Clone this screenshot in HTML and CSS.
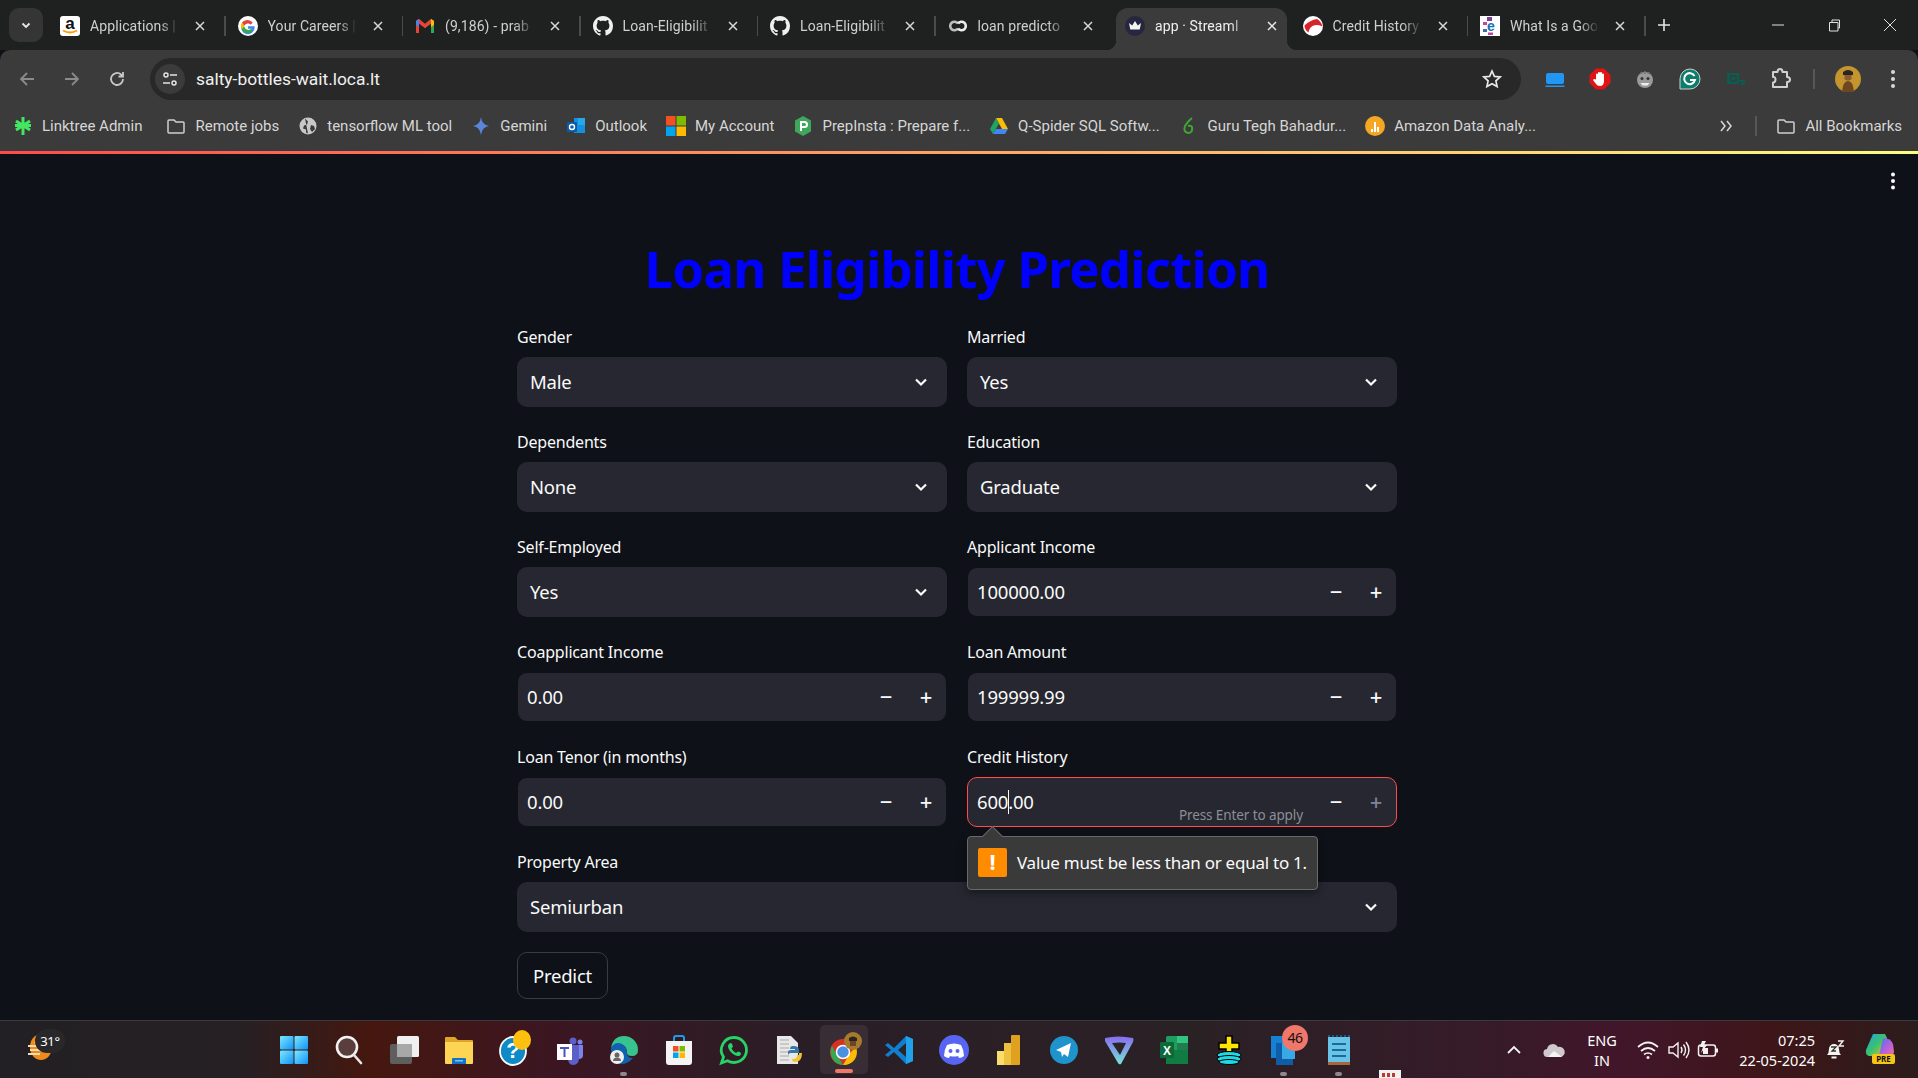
FILE: index.html
```html
<!DOCTYPE html>
<html lang="en">
<head>
<meta charset="utf-8">
<title>app · Streamlit</title>
<link rel="stylesheet" href="styles.css">
</head>
<body>
<header class="tabstrip">
  <div class="tabsearch"><svg viewBox="0 0 12 12" class="ic12"><path d="M2.500 4.500 6 8l3.500-3.500" fill="none" stroke="#e8e8e8" stroke-width="1.800"/></svg></div>
  <div class="tab"><svg class="fav" viewBox="0 0 20 20"><rect width="20" height="20" rx="3" fill="#fff"/><text x="10" y="13" text-anchor="middle" class="favtext">a</text><path d="M3 14.500q7 4 14 0" fill="none" stroke="#f90" stroke-width="1.800"/></svg><span class="tabtitle">Applications |</span><svg class="tabx" viewBox="0 0 12 12"><path d="M2 2l8 8M10 2l-8 8" stroke="#d8d8d8" stroke-width="1.500"/></svg><i class="tabsep"></i></div>
  <div class="tab"><svg class="fav" viewBox="0 0 20 20"><circle cx="10" cy="10" r="10" fill="#fff"/><path d="M16.500 10.200H10v2.600h3.600a4 4 0 1 1-1-4.400l2-2A6.800 6.800 0 1 0 16.700 11z" fill="#4285f4"/><path d="M3.900 6.600A6.800 6.800 0 0 1 14.600 6.400l-2 2a4 4 0 0 0-6.300 1.200z" fill="#ea4335"/><path d="M3.900 13.400a6.800 6.800 0 0 1 0-6.800l2.400 3a4 4 0 0 0 0 .8z" fill="#fbbc05"/><path d="M3.900 13.400l2.400-3a4 4 0 0 0 6.500 2.600l2.200 2.100A6.800 6.800 0 0 1 3.900 13.400z" fill="#34a853"/></svg><span class="tabtitle">Your Careers |</span><svg class="tabx" viewBox="0 0 12 12"><path d="M2 2l8 8M10 2l-8 8" stroke="#d8d8d8" stroke-width="1.500"/></svg><i class="tabsep"></i></div>
  <div class="tab"><svg class="fav" viewBox="0 0 20 20"><path d="M1 17V5l3-2 6 5V12L4 7.500V17z" fill="#ea4335"/><path d="M19 17V5l-3-2-6 5V12l6-4.500V17z" fill="#34a853"/><path d="M4 3l6 5 6-5 3 2-9 7-9-7z" fill="#ea4335"/><path d="M16 3l3 2v4l-3 2z" fill="#fbbc05"/><path d="M1 5v4l3 2V3z" fill="#4285f4"/></svg><span class="tabtitle">(9,186) - prab</span><svg class="tabx" viewBox="0 0 12 12"><path d="M2 2l8 8M10 2l-8 8" stroke="#d8d8d8" stroke-width="1.500"/></svg><i class="tabsep"></i></div>
  <div class="tab"><svg class="fav" viewBox="0 0 16 16"><path fill="#f0f0f0" d="M8 0C3.580 0 0 3.580 0 8c0 3.540 2.290 6.530 5.470 7.590.4.070.55-.17.55-.38 0-.19-.01-.82-.01-1.490-2.010.37-2.530-.49-2.690-.94-.09-.23-.48-.94-.82-1.130-.28-.15-.68-.52-.01-.53.630-.01 1.080.58 1.230.82.720 1.210 1.870.87 2.330.66.070-.52.280-.87.510-1.070-1.780-.2-3.640-.89-3.640-3.950 0-.87.310-1.590.820-2.150-.080-.2-.360-1.020.080-2.120 0 0 .670-.21 2.200.82.640-.18 1.320-.27 2-.27s1.360.09 2 .27c1.530-1.040 2.200-.82 2.200-.82.440 1.100.160 1.920.080 2.120.510.560.820 1.270.820 2.150 0 3.070-1.870 3.750-3.650 3.950.290.250.540.730.540 1.480 0 1.070-.010 1.930-.010 2.200 0 .210.150.460.550.380A8.010 8.010 0 0 0 16 8c0-4.420-3.580-8-8-8z"/></svg><span class="tabtitle">Loan-Eligibilit</span><svg class="tabx" viewBox="0 0 12 12"><path d="M2 2l8 8M10 2l-8 8" stroke="#d8d8d8" stroke-width="1.500"/></svg><i class="tabsep"></i></div>
  <div class="tab"><svg class="fav" viewBox="0 0 16 16"><path fill="#f0f0f0" d="M8 0C3.580 0 0 3.580 0 8c0 3.540 2.290 6.530 5.470 7.590.4.070.55-.17.55-.38 0-.19-.01-.82-.01-1.490-2.010.37-2.530-.49-2.690-.94-.09-.23-.48-.94-.82-1.130-.28-.15-.68-.52-.01-.53.630-.01 1.080.58 1.230.82.720 1.210 1.870.87 2.330.66.070-.52.280-.87.510-1.070-1.780-.2-3.640-.89-3.640-3.950 0-.87.310-1.590.820-2.150-.080-.2-.360-1.020.080-2.120 0 0 .670-.21 2.200.82.640-.18 1.320-.27 2-.27s1.360.09 2 .27c1.530-1.040 2.200-.82 2.200-.82.440 1.100.160 1.920.080 2.120.510.560.820 1.270.820 2.150 0 3.070-1.870 3.750-3.650 3.950.290.250.540.730.540 1.480 0 1.070-.010 1.930-.010 2.200 0 .210.150.460.550.380A8.010 8.010 0 0 0 16 8c0-4.420-3.580-8-8-8z"/></svg><span class="tabtitle">Loan-Eligibilit</span><svg class="tabx" viewBox="0 0 12 12"><path d="M2 2l8 8M10 2l-8 8" stroke="#d8d8d8" stroke-width="1.500"/></svg><i class="tabsep"></i></div>
  <div class="tab"><svg class="fav" viewBox="0 0 20 20"><path d="M10 7.500A4.300 4.300 0 1 0 10 12.500" fill="none" stroke="#bdbdbd" stroke-width="2.600"/><path d="M10 7.500A4.300 4.300 0 1 1 10 12.500" fill="none" stroke="#ececec" stroke-width="2.600"/></svg><span class="tabtitle">loan predicto</span><svg class="tabx" viewBox="0 0 12 12"><path d="M2 2l8 8M10 2l-8 8" stroke="#d8d8d8" stroke-width="1.500"/></svg><i class="tabnosep"></i></div>
  <div class="tab tab-active"><svg class="fav" viewBox="0 0 20 20"><circle cx="10" cy="10" r="10" fill="#262640"/><path d="M4 7l3.200 2.400L10 5l2.800 4.400L16 7l-1.300 6.500H5.300z" fill="#f4f4f4"/></svg><span class="tabtitle">app · Streaml</span><svg class="tabx" viewBox="0 0 12 12"><path d="M2 2l8 8M10 2l-8 8" stroke="#e8e8e8" stroke-width="1.500"/></svg></div>
  <div class="tab"><svg class="fav" viewBox="0 0 20 20"><circle cx="10" cy="10" r="10" fill="#fff"/><path d="M1.500 9.500Q7 4 14 3q4 2 5.500 7.500-6-2.500-10-.5-3.500 2-4 6.500-4-3-4-7z" fill="#d8232a"/></svg><span class="tabtitle">Credit History</span><svg class="tabx" viewBox="0 0 12 12"><path d="M2 2l8 8M10 2l-8 8" stroke="#d8d8d8" stroke-width="1.500"/></svg><i class="tabsep"></i></div>
  <div class="tab"><svg class="fav" viewBox="0 0 20 20"><rect width="20" height="20" fill="#fff"/><rect x="7" y="1" width="5" height="4" fill="#7a3f9d"/><rect x="3" y="6" width="4" height="3" fill="#c2479a"/><rect x="3" y="13" width="4" height="3" fill="#3a6db5"/><text x="11" y="15" text-anchor="middle" class="favtext favtext-e">e</text><rect x="8" y="16.500" width="5" height="2.500" fill="#c2479a"/></svg><span class="tabtitle">What Is a Goo</span><svg class="tabx" viewBox="0 0 12 12"><path d="M2 2l8 8M10 2l-8 8" stroke="#d8d8d8" stroke-width="1.500"/></svg><i class="tabsep"></i></div>
  <svg class="newtab" viewBox="0 0 16 16"><path d="M8 2v12M2 8h12" stroke="#e4e4e4" stroke-width="1.600"/></svg>
  <div class="winctrls">
    <svg viewBox="0 0 16 16" class="winbtn"><path d="M2 8h12" stroke="#e0e0e0" stroke-width="1"/></svg>
    <svg viewBox="0 0 16 16" class="winbtn"><path d="M3.500 5.500h8.500v8.500H3.500zM6 5.500V3h7.500v8H12" fill="none" stroke="#e0e0e0" stroke-width="1"/></svg>
    <svg viewBox="0 0 16 16" class="winbtn"><path d="M2 2l12 12M14 2L2 14" stroke="#e0e0e0" stroke-width="1"/></svg>
  </div>
</header>

<div class="chrome">
  <div class="toolbar">
    <svg class="navbtn" viewBox="0 0 20 20"><path d="M17 10H4M10 4l-6 6 6 6" fill="none" stroke="#8a8a8a" stroke-width="1.800"/></svg>
    <svg class="navbtn" viewBox="0 0 20 20"><path d="M3 10h13M10 4l6 6-6 6" fill="none" stroke="#8a8a8a" stroke-width="1.800"/></svg>
    <svg class="navbtn" viewBox="0 0 20 20"><path d="M16 10a6 6 0 1 1-2-4.500L16 7.500M16 3v4.500h-4.500" fill="none" stroke="#c8c8c8" stroke-width="1.800"/></svg>
    <div class="omnibox">
      <span class="siteinfo"><svg viewBox="0 0 18 18" class="ic18"><circle cx="5" cy="5" r="2" fill="none" stroke="#e4e4e4" stroke-width="1.500"/><path d="M9 5h7M2 13h7" stroke="#e4e4e4" stroke-width="1.500"/><circle cx="13" cy="13" r="2" fill="none" stroke="#e4e4e4" stroke-width="1.500"/></svg></span>
      <span class="url">salty-bottles-wait.loca.lt</span>
      <svg class="star" viewBox="0 0 20 20"><path d="M10 2l2.400 5.400 5.800.6-4.300 3.900 1.200 5.700L10 14.700l-5.100 2.900 1.200-5.700L1.800 8l5.800-.6z" fill="none" stroke="#e8e8e8" stroke-width="1.700"/></svg>
    </div>
    <div class="exts">
      <svg class="ext" viewBox="0 0 22 22"><rect x="2" y="5" width="18" height="11" rx="2" fill="#2196f3"/><rect x="1.500" y="17.500" width="19" height="1.500" fill="#2196f3"/></svg>
      <svg class="ext" viewBox="0 0 22 22"><path d="M7 .5h8L21.500 7v8L15 21.500H7L.5 15V7z" fill="#e01414"/><path d="M7 12V6.500a1 1 0 0 1 2 0V5a1 1 0 0 1 2 0 1 1 0 0 1 2 0v1.500a1 1 0 0 1 2 0V13q0 5-4 5-3 0-4-2l-3-4q1-1.500 3-.5z" fill="#fff"/></svg>
      <svg class="ext" viewBox="0 0 22 22"><circle cx="11" cy="12" r="8" fill="#9a9a9a"/><path d="M7 4l1 2M11 3v3M15 4l-1 2" stroke="#777" stroke-width="1.500"/><circle cx="8" cy="10.500" r="1.500" fill="#333"/><circle cx="14" cy="10.500" r="1.500" fill="#333"/><path d="M6.500 15h9l-2 2.500h-5z" fill="#eee"/></svg>
      <svg class="ext" viewBox="0 0 22 22"><path d="M11 1a10 10 0 0 1 0 20H1V11A10 10 0 0 1 11 1z" fill="#0e7c6b" stroke="#d0d0d0" stroke-width="1"/><path d="M15.500 8A5.500 5.500 0 1 0 16 12h-5" fill="none" stroke="#fff" stroke-width="2"/></svg>
      <svg class="ext" viewBox="0 0 22 22"><path d="M3 5h12v11H3z" fill="#0b5d52"/><rect x="7" y="8" width="5" height="5" fill="none" stroke="#3b3b3b" stroke-width="1.500"/><path d="M15 13h6M17 16h4" stroke="#0b5d52" stroke-width="2"/></svg>
      <svg class="ext" viewBox="0 0 22 22"><path d="M4 4h4.500q0-3 2.500-3t2.500 3H18v5q3 0 3 2.500T18 14v5H4v-4.500q2.500 0 2.500-3T4 9z" fill="none" stroke="#d0d0d0" stroke-width="2" stroke-linejoin="round"/></svg>
      <i class="extsep"></i>
      <svg class="avatar" viewBox="0 0 26 26"><circle cx="13" cy="13" r="13" fill="#c2952f"/><path d="M8 6q5-4 10 0v3H8z" fill="#2c2420"/><path d="M9.500 9h7v4q-3.500 3-7 0z" fill="#8a5a33"/><path d="M7 26q1-11 6-11t6 11z" fill="#6e4620"/></svg>
      <svg class="kebab" viewBox="0 0 6 22"><circle cx="3" cy="4" r="2" fill="#d8d8d8"/><circle cx="3" cy="11" r="2" fill="#d8d8d8"/><circle cx="3" cy="18" r="2" fill="#d8d8d8"/></svg>
    </div>
  </div>
  <nav class="bookmarks">
    <a class="bm"><svg class="bmic" viewBox="0 0 20 20"><path d="M10 1v18M3 5l14 9M17 5L3 14M2 9.500h16" stroke="#43e660" stroke-width="3"/></svg>Linktree Admin</a>
    <a class="bm"><svg class="bmic" viewBox="0 0 20 20"><path d="M2 5q0-1 1-1h5l2 2h7q1 0 1 1v9q0 1-1 1H3q-1 0-1-1z" fill="none" stroke="#d0d0d0" stroke-width="1.500"/></svg>Remote jobs</a>
    <a class="bm"><svg class="bmic" viewBox="0 0 20 20"><circle cx="10" cy="10" r="8.500" fill="#c8c8c8"/><path d="M7 2.500l3 3-1 3-3 1-1 3 3 1v3l2 1M13 9l3 1 1 3-3 3-2-3z" fill="#3b3b3b"/></svg>tensorflow ML tool</a>
    <a class="bm"><svg class="bmic" viewBox="0 0 20 20"><path d="M10 1q1 8 8 9-7 1-8 9-1-8-8-9 7-1 8-9z" fill="#5a85d8"/></svg>Gemini</a>
    <a class="bm"><svg class="bmic" viewBox="0 0 20 20"><rect x="8" y="2" width="11" height="15" fill="#1490df"/><rect x="12" y="2" width="7" height="7" fill="#28a8ea"/><rect x="1" y="6" width="10" height="10" rx="1" fill="#0a5ca8"/><circle cx="6" cy="11" r="2.500" fill="none" stroke="#fff" stroke-width="1.400"/></svg>Outlook</a>
    <a class="bm"><svg class="bmic" viewBox="0 0 20 20"><rect width="9.500" height="9.500" fill="#f25022"/><rect x="10.500" width="9.500" height="9.500" fill="#7fba00"/><rect y="10.500" width="9.500" height="9.500" fill="#00a4ef"/><rect x="10.500" y="10.500" width="9.500" height="9.500" fill="#ffb900"/></svg>My Account</a>
    <a class="bm"><svg class="bmic" viewBox="0 0 20 20"><path d="M10 0l8 4.500v11L10 20l-8-4.500v-11z" fill="#3fa75c"/><path d="M8 15V6h3.500a2.500 2.500 0 0 1 0 5H9" fill="none" stroke="#fff" stroke-width="2"/></svg>PrepInsta : Prepare f...</a>
    <a class="bm"><svg class="bmic" viewBox="0 0 20 20"><path d="M7 2h6l6 11h-6z" fill="#fbbc05"/><path d="M7 2l3 5.500-6 10.500L1 13z" fill="#1fa463"/><path d="M7 13h12l-3 5H4z" fill="#4285f4"/></svg>Q-Spider SQL Softw...</a>
    <a class="bm"><svg class="bmic" viewBox="0 0 20 20"><path d="M13 2Q9 5 6 10q-2 6 3 7 5 0 4-6-1-2-4-1" fill="none" stroke="#3fa535" stroke-width="2"/></svg>Guru Tegh Bahadur...</a>
    <a class="bm"><svg class="bmic" viewBox="0 0 20 20"><circle cx="10" cy="10" r="10" fill="#f5a623"/><path d="M6 13h2v3H6zM9 6h2v10H9zM12 11h2v5h-2z" fill="#fff"/></svg>Amazon Data Analy...</a>
    <span class="bmend">
      <svg class="bmmore" viewBox="0 0 14 14"><path d="M2 2l4 5-4 5M8 2l4 5-4 5" fill="none" stroke="#d8d8d8" stroke-width="1.500"/></svg>
      <i class="bmsep"></i>
      <a class="bm"><svg class="bmic" viewBox="0 0 20 20"><path d="M2 5q0-1 1-1h5l2 2h7q1 0 1 1v9q0 1-1 1H3q-1 0-1-1z" fill="none" stroke="#d0d0d0" stroke-width="1.500"/></svg>All Bookmarks</a>
    </span>
  </nav>
</div>
<div class="decoration"></div>

<main class="app">
  <svg class="appmenu" viewBox="0 0 6 20"><circle cx="3" cy="3.500" r="2" fill="#fafafa"/><circle cx="3" cy="10" r="2" fill="#fafafa"/><circle cx="3" cy="16.500" r="2" fill="#fafafa"/></svg>
  <section class="form">
    <h1 class="title">Loan Eligibility Prediction</h1>
    <div class="grid">
      <div class="field"><label class="label">Gender</label><div class="select"><span>Male</span><svg class="chev" viewBox="0 0 16 16"><path d="M3 5.500l5 5 5-5" fill="none" stroke="#fafafa" stroke-width="2.200"/></svg></div></div>
      <div class="field"><label class="label">Married</label><div class="select"><span>Yes</span><svg class="chev" viewBox="0 0 16 16"><path d="M3 5.500l5 5 5-5" fill="none" stroke="#fafafa" stroke-width="2.200"/></svg></div></div>
      <div class="field"><label class="label">Dependents</label><div class="select"><span>None</span><svg class="chev" viewBox="0 0 16 16"><path d="M3 5.500l5 5 5-5" fill="none" stroke="#fafafa" stroke-width="2.200"/></svg></div></div>
      <div class="field"><label class="label">Education</label><div class="select"><span>Graduate</span><svg class="chev" viewBox="0 0 16 16"><path d="M3 5.500l5 5 5-5" fill="none" stroke="#fafafa" stroke-width="2.200"/></svg></div></div>
      <div class="field"><label class="label">Self-Employed</label><div class="select"><span>Yes</span><svg class="chev" viewBox="0 0 16 16"><path d="M3 5.500l5 5 5-5" fill="none" stroke="#fafafa" stroke-width="2.200"/></svg></div></div>
      <div class="field"><label class="label">Applicant Income</label><div class="number"><span class="numval">100000.00</span><span class="step">&#8722;</span><span class="step">+</span></div></div>
      <div class="field"><label class="label">Coapplicant Income</label><div class="number"><span class="numval">0.00</span><span class="step">&#8722;</span><span class="step">+</span></div></div>
      <div class="field"><label class="label">Loan Amount</label><div class="number"><span class="numval">199999.99</span><span class="step">&#8722;</span><span class="step">+</span></div></div>
      <div class="field"><label class="label">Loan Tenor (in months)</label><div class="number"><span class="numval">0.00</span><span class="step">&#8722;</span><span class="step">+</span></div></div>
      <div class="field field-popup"><label class="label">Credit History</label>
        <div class="number number-error"><span class="numval">600<i class="caret"></i>.00</span><span class="hint">Press Enter to apply</span><span class="step">&#8722;</span><span class="step step-dim">+</span></div>
        <div class="popup"><span class="warn">!</span><span>Value must be less than or equal to 1.</span></div>
      </div>
      <div class="field field-wide"><label class="label">Property Area</label><div class="select"><span>Semiurban</span><svg class="chev" viewBox="0 0 16 16"><path d="M3 5.500l5 5 5-5" fill="none" stroke="#fafafa" stroke-width="2.200"/></svg></div></div>
    </div>
    <button class="predict">Predict</button>
  </section>
</main>

<footer class="taskbar">
  <div class="weather"><svg class="wicon" viewBox="0 0 30 30"><ellipse cx="15" cy="15" rx="11" ry="13" fill="#f08a1d"/><path d="M12 3l4 0 0 8-8 0z" fill="#f7c948"/><path d="M2 14h14M4 18h22M2 22h12" stroke="#f2dcb0" stroke-width="2.200"/></svg><span class="temp">31°</span></div>
  <div class="dock">
    <div class="slot"><svg class="ti" viewBox="0 0 30 30"><defs><linearGradient id="w" x1="0" y1="0" x2="1" y2="1"><stop offset="0" stop-color="#7ee8ff"/><stop offset="1" stop-color="#0f93f5"/></linearGradient></defs><rect x="1" y="1" width="13.500" height="13.500" rx="1" fill="url(#w)"/><rect x="15.500" y="1" width="13.500" height="13.500" rx="1" fill="url(#w)"/><rect x="1" y="15.500" width="13.500" height="13.500" rx="1" fill="url(#w)"/><rect x="15.500" y="15.500" width="13.500" height="13.500" rx="1" fill="url(#w)"/></svg></div>
    <div class="slot"><svg class="ti" viewBox="0 0 30 30"><circle cx="13" cy="12" r="10" fill="#5a3e3e" stroke="#f2f2f2" stroke-width="2.600"/><path d="M20 20l7 8" stroke="#e8e8e8" stroke-width="2.600" stroke-linecap="round"/></svg></div>
    <div class="slot"><svg class="ti" viewBox="0 0 30 30"><rect x="1" y="9" width="22" height="20" rx="2" fill="#5e5e5e"/><rect x="8" y="1" width="22" height="21" rx="1.500" fill="#f0f0f0"/><rect x="8" y="9" width="15" height="13" fill="#a8a8a8"/></svg></div>
    <div class="slot"><svg class="ti" viewBox="0 0 30 30"><path d="M1 3q0-1 1-1h9l3 3h14q1 0 1 1v4H1z" fill="#e0a526"/><path d="M1 7h28v21q0 1-1 1H2q-1 0-1-1z" fill="#fcd554"/><path d="M8 24q0-1 1-1h12q1 0 1 1v5H8z" fill="#1272c4"/><rect x="11" y="25" width="8" height="1.500" fill="#7cc2f5"/></svg></div>
    <div class="slot"><svg class="ti" viewBox="0 0 30 30"><ellipse cx="14" cy="16" rx="13" ry="14" fill="#0e8ac8" stroke="#fff" stroke-width="1.800"/><text x="14" y="23" text-anchor="middle" class="helpq">?</text><ellipse cx="23" cy="5" rx="9" ry="10" fill="#fdc00e"/></svg></div>
    <div class="slot"><svg class="ti" viewBox="0 0 30 30"><circle cx="19" cy="6" r="3.500" fill="#5b5fc7"/><circle cx="26" cy="7" r="2.500" fill="#7b83eb"/><path d="M21 10h8v10q0 4-4 4h-4z" fill="#7b83eb"/><path d="M14 10h11v13q0 7-6 7-5 0-5-7z" fill="#5b5fc7"/><rect x="3" y="9" width="15" height="16" fill="#fff"/><path d="M6 12h9v2H11.500v8h-2v-8H6z" fill="#4b53bc"/></svg></div>
    <div class="slot slot-dot"><svg class="ti" viewBox="0 0 30 30"><path d="M15 1a14 14 0 0 1 14 14q0 6-6 6-5 0-5-3 0-6-4-8-7-3-12 3Q4 1 15 1z" fill="#38c28e"/><path d="M2 13q4-7 11-4 5 3 5 9 0 5 6 5-5 6-12 6Q2 29 2 13z" fill="#1161b0"/><circle cx="8" cy="22" r="7" fill="#f0f0f0"/><circle cx="8" cy="20" r="2.500" fill="#666"/><path d="M4 26q0-3.500 4-3.500t4 3.500z" fill="#666"/></svg></div>
    <div class="slot"><svg class="ti" viewBox="0 0 30 30"><path d="M10 7V3q0-2 2-2h6q2 0 2 2v4" fill="none" stroke="#1b9de2" stroke-width="2"/><path d="M2 6h26v21q0 3-3 3H5q-3 0-3-3z" fill="#f4f4f4"/><rect x="9" y="11" width="5.500" height="5.500" fill="#f25022"/><rect x="15.500" y="11" width="5.500" height="5.500" fill="#7fba00"/><rect x="9" y="17.500" width="5.500" height="5.500" fill="#00a4ef"/><rect x="15.500" y="17.500" width="5.500" height="5.500" fill="#ffb900"/></svg></div>
    <div class="slot"><svg class="ti" viewBox="0 0 30 30"><path d="M15 2.500A12.500 12.500 0 0 1 15 27.500q-3.500 0-6.500-1.700L2.500 28l2-6A12.500 12.500 0 0 1 15 2.500z" fill="none" stroke="#25d366" stroke-width="2.800"/><path d="M10 9q2-2 3 0l1 2.500-1.500 2q1.500 3 4.500 4.500l2-1.500 2.500 1q1.500 1.500-.5 3-3 1.500-7-1.500-5-4-5-8 0-1 1-2z" fill="#25d366"/></svg></div>
    <div class="slot"><svg class="ti" viewBox="0 0 30 30"><path d="M3 1h14l7 7v21H3z" fill="#e8e8e8"/><path d="M6 5h9M6 9h9M6 13h9M6 17h9M6 21h9M6 25h9" stroke="#aaa" stroke-width="1"/><path d="M19 11q6 0 6 4v3h-8q-3 0-3 3v-4q0-2 3-2h4v-1h-5q0-3 3-3z" fill="#3776ab"/><path d="M28 18q0 9-7 9-3 0-3-3h1q4 0 4-3v-1h2v-2z" fill="#f2c230"/></svg></div>
    <div class="slot"><div class="tile"><svg class="ti" viewBox="0 0 30 30"><circle cx="14" cy="17" r="13" fill="#d93025"/><path d="M3 11l11 19a13 13 0 0 1-11-19z" fill="#34a853"/><path d="M14 30l7-12 6-6a13 13 0 0 1-13 18z" fill="#fbbc05"/><path d="M14 4h11a13 13 0 0 1 2 8l-13 0z" fill="#d93025"/><circle cx="14" cy="17" r="6.500" fill="#4a90e2" stroke="#fff" stroke-width="1.500"/><circle cx="24" cy="6" r="9" fill="#a67a2d"/><path d="M20 3q4-3 8 0v3h-8z" fill="#2c2420"/><path d="M21 6h6v5h-6z" fill="#6d4424"/></svg><i class="runbar"></i></div></div>
    <div class="slot"><svg class="ti" viewBox="0 0 30 30"><path d="M22 1l7 3v22l-7 3-12-12-6 5-3-2 6-5-6-5 3-2 6 5z" fill="#0e7fd1"/><path d="M22 8l-8 7 8 7z" fill="#2c2528"/><path d="M22 1l7 3v22l-7 3z" fill="#21a1ea"/></svg></div>
    <div class="slot"><svg class="ti" viewBox="0 0 30 30"><circle cx="15" cy="15" r="15" fill="#5865f2"/><path d="M8 10q7-3 14 0 3 5 3 11-2.500 1.800-5 2l-1-2q-4 1-8 0l-1 2q-2.500-.200-5-2 0-6 3-11z" fill="#fff"/><circle cx="11.500" cy="16" r="2" fill="#5865f2"/><circle cx="18.500" cy="16" r="2" fill="#5865f2"/></svg></div>
    <div class="slot"><svg class="ti" viewBox="0 0 30 30"><rect x="3" y="16" width="9" height="14" fill="#f9dc6b"/><rect x="10" y="8" width="9" height="22" fill="#efc03e"/><rect x="17" y="0" width="9" height="30" rx="1" fill="#e0a020"/></svg></div>
    <div class="slot"><svg class="ti" viewBox="0 0 30 30"><circle cx="15" cy="15" r="14" fill="#1f93cc"/><path d="M7 15l15-7-3 14-4-3-2 3-1-5z" fill="#fff"/></svg></div>
    <div class="slot"><svg class="ti" viewBox="0 0 30 30"><defs><linearGradient id="p" x1="0" y1="0" x2="0" y2="1"><stop offset="0" stop-color="#8a6cf0"/><stop offset="1" stop-color="#72e6d6"/></linearGradient></defs><path d="M1 3q13-3 28 0 1 1 0 4L17 29q-2 1-3-1L1 6z" fill="url(#p)"/><path d="M8 8q8-1 14 0l-6 12z" fill="#2c2528"/></svg></div>
    <div class="slot"><svg class="ti" viewBox="0 0 30 30"><rect x="7" y="1" width="22" height="28" rx="1.500" fill="#1f9d60"/><rect x="18" y="1" width="11" height="7" fill="#33c481"/><rect x="18" y="8" width="11" height="7" fill="#1f7d4e"/><rect x="7" y="15" width="22" height="14" fill="#107c41"/><rect x="1" y="7" width="14" height="16" rx="1" fill="#0b6a39"/><text x="8" y="20" text-anchor="middle" class="xl">X</text></svg></div>
    <div class="slot"><svg class="ti" viewBox="0 0 30 30"><path d="M12 1h6v7h7v6h-7v5h-6v-5H5V8h7z" fill="#ffe600" stroke="#000" stroke-width="1.500"/><ellipse cx="15" cy="20" rx="12" ry="3.500" fill="#1fd8e6" stroke="#000" stroke-width="1"/><ellipse cx="15" cy="24" rx="12" ry="3.500" fill="#1fd8e6" stroke="#000" stroke-width="1"/><ellipse cx="15" cy="27" rx="10" ry="2.500" fill="#1fd8e6" stroke="#000" stroke-width="1"/></svg></div>
    <div class="slot slot-dot"><svg class="ti" viewBox="0 0 30 30"><path d="M2 1h20v22H2z" fill="#1581d2"/><path d="M7 8h17v22H7z" fill="#0f5da8"/><path d="M13 8h13v16H13z" fill="#38a9e6"/></svg><span class="badge">46</span></div>
    <div class="slot slot-dot"><svg class="ti" viewBox="0 0 30 30"><rect x="4" y="2" width="22" height="27" fill="#69c3e8"/><rect x="4" y="27" width="22" height="3" fill="#a8673a"/><path d="M5 2v-2M9 2v-2M13 2v-2M17 2v-2M21 2v-2M25 2v-2" stroke="#1b6f96" stroke-width="1.500"/><path d="M8 9h14M8 15h14M8 21h14" stroke="#1a6c94" stroke-width="2"/></svg></div>
  </div>
  <div class="tray">
    <svg class="tray-chev" viewBox="0 0 16 16"><path d="M2 11l6-6 6 6" fill="none" stroke="#f2f2f2" stroke-width="1.800"/></svg>
    <svg class="tray-cloud" viewBox="0 0 22 16"><path d="M5 15a4 4 0 0 1-1-8 6 6 0 0 1 11-2 5 5 0 0 1 3 10z" fill="#cfc8cc"/><path d="M5 15l6-6 8 6z" fill="#f4f4f4"/></svg>
    <div class="lang">ENG<br>IN</div>
    <svg class="tray-ic" viewBox="0 0 22 22"><path d="M1 8q10-9 20 0M4 12q7-6 14 0M7 15.500q4-3 8 0" fill="none" stroke="#f2f2f2" stroke-width="1.700"/><circle cx="11" cy="18.500" r="1.500" fill="#f2f2f2"/></svg>
    <svg class="tray-ic" viewBox="0 0 22 22"><path d="M2 8h4l5-4v14l-5-4H2z" fill="none" stroke="#f2f2f2" stroke-width="1.400"/><path d="M14 8q2 3 0 6M16.500 5.500q4 5.500 0 11M19 3q6 8 0 16" fill="none" stroke="#f2f2f2" stroke-width="1.400"/></svg>
    <svg class="tray-ic" viewBox="0 0 22 22"><rect x="1.500" y="6" width="17" height="11" rx="2.500" fill="none" stroke="#f2f2f2" stroke-width="1.500"/><rect x="19" y="9.500" width="2" height="4" fill="#f2f2f2"/><path d="M5 2l-2 6h3l-2 6 6-8H7l2-4z" fill="#f2f2f2"/><rect x="6" y="9" width="5" height="6" fill="#f2f2f2"/></svg>
    <div class="clock">07:25<br>22-05-2024</div>
    <svg class="tray-bell" viewBox="0 0 22 22"><path d="M4 16q2-2 2-6a5 5 0 0 1 10 0q0 4 2 6z" fill="#f4f4f4"/><path d="M8.500 17.500h5v2h-5z" fill="#f4f4f4"/><path d="M8 8h5l-4 4h4" fill="none" stroke="#332" stroke-width="1.300"/><path d="M15 2h5l-4 5h5" fill="none" stroke="#f4f4f4" stroke-width="1.400"/></svg>
    <div class="copilot"><svg class="copi" viewBox="0 0 30 26"><defs><linearGradient id="c1" x1="0" y1="0" x2="1" y2="1"><stop offset="0" stop-color="#1fa2e8"/><stop offset=".5" stop-color="#39c26e"/><stop offset="1" stop-color="#f0c030"/></linearGradient><linearGradient id="c2" x1="0" y1="0" x2="1" y2="1"><stop offset="0" stop-color="#3a7ae8"/><stop offset=".5" stop-color="#b060e0"/><stop offset="1" stop-color="#f070a0"/></linearGradient></defs><path d="M8 0h12l2 4-8 18H4Q0 21 1 16z" fill="url(#c1)"/><path d="M18 4q8 0 10 6l1 8q-1 4-5 4H14z" fill="url(#c2)"/></svg><span class="pre">PRE</span></div>
  </div>
  <div class="peek"><i></i><i></i><i></i></div>
</footer>
</body>
</html>
```
FILE: styles.css
```css
* { box-sizing: border-box; }
html, body { margin: 0; padding: 0; }
body {
  width: 1918px; height: 1078px; overflow: hidden;
  display: flex; flex-direction: column;
  background: #0e1117; color: #fafafa;
  font-family: "Noto Sans", sans-serif;
}
a { color: inherit; text-decoration: none; }
i { display: block; font-style: normal; }
svg { display: block; flex: none; overflow: visible; }

/* Browser tab strip */
.tabstrip {
  height: 50px; flex: none; background: #1f2120;
  display: flex; align-items: flex-end; padding-left: 9px;
  font-family: "Roboto", sans-serif; font-size: 14px;
}
.tabsearch {
  width: 34px; height: 34px; margin: 0 8px 8px 0; border-radius: 10px; background: #353535;
  display: flex; align-items: center; justify-content: center;
}
.ic12 { width: 12px; height: 12px; }
.tab {
  width: 177.5px; height: 42px; flex: none; padding: 0 3px 7px 9px;
  display: flex; align-items: center; color: #cfcfcf; position: relative;
}
.fav { width: 20px; height: 20px; margin-right: 10px; }
.favtext { font: 700 17px "Liberation Sans", sans-serif; fill: #111; }
.favtext-e { fill: #1b6fb5; font-size: 14px; }
.tabtitle {
  width: 100px; white-space: nowrap; letter-spacing: .1px;
  -webkit-mask-image: linear-gradient(90deg, #000 75%, transparent 96%);
  mask-image: linear-gradient(90deg, #000 75%, transparent 96%);
}
.tabx { width: 12px; height: 12px; margin-left: 11px; }
.tabsep { width: 1.5px; height: 20px; background: #4b4b4b; margin-left: 18px; }
.tabnosep { width: 1.5px; margin-left: 18px; }
.tab-active {
  width: 171px; margin-right: 6.500px; background: #3b3b3b; border-radius: 12px 12px 0 0; color: #efefef;
}
.tab-active::before, .tab-active::after {
  content: ""; position: absolute; bottom: 0; width: 10px; height: 10px;
}
.tab-active::before { left: -10px; background: radial-gradient(circle at 0 0, transparent 10px, #3b3b3b 10.500px); }
.tab-active::after { right: -10px; background: radial-gradient(circle at 100% 0, transparent 10px, #3b3b3b 10.500px); }
.newtab { width: 16px; height: 16px; margin: 0 0 17px 7px; }
.winctrls { margin: 0 20px 17px auto; display: flex; gap: 40px; }
.winbtn { width: 16px; height: 16px; }

/* Toolbar + bookmarks */
.chrome { background: #3b3b3b; border-radius: 10px 10px 0 0; height: 101px; flex: none; }
.toolbar { height: 58px; padding: 8px 0; display: flex; align-items: center; }
.navbtn { width: 20px; height: 20px; margin-left: 17px; margin-right: 8px; }
.omnibox {
  width: 1371px; height: 42px; margin-left: 15px; border-radius: 21px; background: #282828;
  display: flex; align-items: center; padding: 0 19px 0 5px;
}
.siteinfo {
  width: 30px; height: 30px; border-radius: 50%; background: #3b3b3b; margin-right: 11px;
  display: flex; align-items: center; justify-content: center;
}
.ic18 { width: 18px; height: 18px; }
.url { flex: 1; font: 17.400px "Roboto", sans-serif; color: #f0f0f0; }
.star { width: 20px; height: 20px; }
.exts { display: flex; align-items: center; }
.ext { width: 22px; height: 22px; margin-left: 23px; }
.extsep { width: 2px; height: 20px; background: #575757; margin-left: 22px; }
.avatar { width: 26px; height: 26px; margin-left: 20px; }
.kebab { width: 6px; height: 22px; margin-left: 29px; }

.bookmarks {
  height: 36px; padding: 0 16px 0 13px; display: flex; align-items: center; gap: 19px;
  font: 15px "Roboto", sans-serif; color: #d6d6d6;
}
.bm { display: flex; align-items: center; gap: 9px; white-space: nowrap; }
.bm:first-child { margin-right: 5px; }
.bmic { width: 20px; height: 20px; }
.bmend { margin-left: auto; display: flex; align-items: center; }
.bmmore { width: 14px; height: 14px; margin-right: 22px; }
.bmsep { width: 2px; height: 20px; background: #575757; margin-right: 19px; }

.decoration { height: 3px; flex: none; background: linear-gradient(90deg, #ff4b4b, #fffd80); }

/* Streamlit app */
.app { flex: 1; position: relative; padding: 0 0 0 517px; }
.appmenu { position: absolute; right: 22px; top: 17px; width: 6px; height: 20px; }
.form { width: 880px; padding-top: 72px; }
.title {
  margin: 0 0 16px; height: 84px; line-height: 84px; text-align: center;
  font-size: 51px; font-weight: 700; color: #0000ff; letter-spacing: -.8px;
}
.grid { display: grid; grid-template-columns: 430px 430px; gap: 24px 20px; }
.field { display: flex; flex-direction: column; position: relative; }
.field-wide { grid-column: 1 / 3; }
.label { height: 22px; line-height: 22px; margin-bottom: 9px; font-size: 16px; letter-spacing: -.2px; }
.select, .number {
  height: 50px; border-radius: 10px; background: #262730; display: flex; align-items: center;
  font-size: 18.500px; letter-spacing: -.2px;
}
.select { padding: 0 18px 0 13px; justify-content: space-between; }
.select span { margin-bottom: 2px; }
.chev { width: 16px; height: 16px; }
.number { border: 1px solid #0e1117; padding-left: 9px; position: relative; }
.number-error { border-color: #ff4b4b; }
.numval { flex: 1; margin-bottom: 2px; }
.caret { display: inline-block; width: 1px; height: 24px; margin: 0 -1px -5px 0; background: #fafafa; }
.step { width: 40px; text-align: center; font-size: 22px; line-height: 1; font-weight: 500; margin-bottom: 2px; }
.step-dim { color: #808495; }
.hint { position: absolute; right: 93px; top: 28px; font-size: 13.500px; color: #8c8e96; letter-spacing: -.1px; }
.popup {
  position: absolute; left: 0; top: 90px; z-index: 5; width: 351px; height: 54px;
  display: flex; align-items: center; gap: 10px; padding: 0 0 2px 10px;
  background: #3a3a3a; border: 1px solid #6a6a6a; border-radius: 4px;
  box-shadow: 0 3px 8px rgba(0,0,0,.4); font-size: 17px; letter-spacing: -.25px; white-space: nowrap;
}
.popup::before {
  content: ""; position: absolute; left: 17px; top: -8px; width: 14px; height: 14px;
  background: #3a3a3a; transform: rotate(45deg); border-left: 1px solid #6a6a6a; border-top: 1px solid #6a6a6a;
}
.warn {
  width: 29px; height: 29px; background: #ff8c00; border-radius: 2px; flex: none; position: relative;
  text-align: center; font-size: 22px; line-height: 27px; font-weight: 700; color: #fff;
}
.predict {
  margin-top: 20px; width: 91px; height: 47px; padding: 0; border-radius: 10px;
  background: #0e1117; border: 1px solid #3a3c44; color: #fafafa;
  font: 18.500px "Noto Sans", sans-serif; letter-spacing: -.2px;
}

/* Windows taskbar */
.taskbar {
  height: 58px; flex: none; position: relative; display: flex; align-items: center;
  border-top: 1px solid #3d393c;
  background: linear-gradient(90deg, #222024 0, #262024 240px, #45170f 370px, #3b1622 560px, #2a1e26 800px, #2a2125 1200px, #371a28 1500px, #42162a 1620px, #3d1618 1780px, #2c1c1c 1918px);
  font-family: "Noto Sans", sans-serif; color: #fff;
}
.weather { width: 266px; flex: none; height: 100%; position: relative; }
.wicon { position: absolute; left: 26px; top: 11px; width: 30px; height: 30px; }
.temp {
  position: absolute; left: 35px; top: 8px; width: 30px; height: 24px; border-radius: 12px; background: #28282a;
  font-size: 13px; line-height: 24px; text-align: center; letter-spacing: -.3px;
}
.dock { display: flex; }
.slot { width: 55px; height: 49px; display: flex; align-items: center; justify-content: center; position: relative; }
.ti { width: 30px; height: 30px; }
.tile {
  width: 48px; height: 49px; border-radius: 5px; background: rgba(255,255,255,.07);
  display: flex; align-items: center; justify-content: center; position: relative;
}
.runbar { position: absolute; left: 15px; bottom: 1px; width: 18px; height: 4px; border-radius: 2px; background: #f0776a; }
.slot-dot::after {
  content: ""; position: absolute; left: 24px; bottom: -2px; width: 7px; height: 4px; border-radius: 2px; background: #8e878b;
}
.helpq { font: 700 22px "Liberation Sans", sans-serif; fill: #fff; }
.xl { font: 700 12px "Liberation Sans", sans-serif; fill: #fff; }
.badge {
  position: absolute; left: 26px; top: 0; width: 26px; height: 26px; border-radius: 50%; background: #f0776a;
  color: #111; font-size: 14px; line-height: 26px; text-align: center; letter-spacing: -.4px;
}
.tray { margin-left: auto; display: flex; align-items: center; padding-right: 23px; font-size: 14.500px; line-height: 20px; }
.tray-chev { width: 16px; height: 16px; }
.tray-cloud { width: 22px; height: 16px; margin-left: 21.500px; }
.lang { width: 40px; margin-left: 17px; margin-right: 14.500px; text-align: center; }
.tray-ic { width: 22px; height: 22px; margin-right: 8px; }
.clock { width: 81.500px; margin-left: 7px; text-align: right; white-space: nowrap; }
.tray-bell { width: 22px; height: 22px; margin-left: 8px; }
.copilot { position: relative; width: 30px; height: 32px; margin-left: 20px; }
.copi { width: 30px; height: 26px; }
.pre {
  position: absolute; left: 7px; top: 20px; width: 23px; height: 10px; border-radius: 2px; background: #f5c518;
  color: #111; font-size: 8px; line-height: 10px; font-weight: 700; text-align: center;
}
.peek { position: absolute; left: 1379px; top: 49px; width: 22px; height: 9px; background: #f2f2f2; display: flex; gap: 2px; padding: 3px; }
.peek i { width: 3px; height: 4px; background: #c0392b; }
```
